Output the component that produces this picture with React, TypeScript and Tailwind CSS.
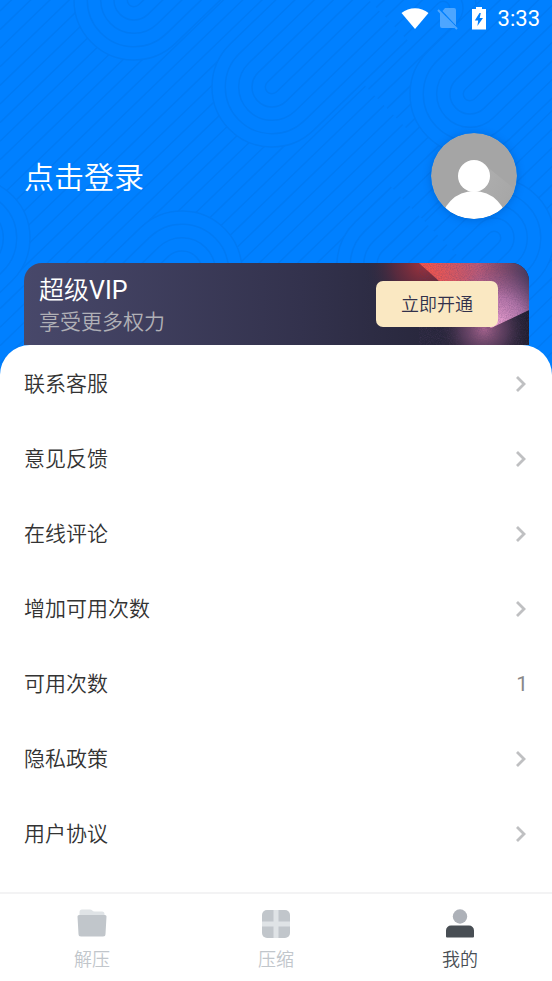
import React from "react";

type LoopProps = {
  x: number;
  y: number;
  angle: number;
  length: number;
};

type MenuItem = {
  label: string;
  value?: string;
};

const menuItems: MenuItem[] = [
  { label: "联系客服" },
  { label: "意见反馈" },
  { label: "在线评论" },
  { label: "增加可用次数" },
  { label: "可用次数", value: "1" },
  { label: "隐私政策" },
  { label: "用户协议" },
];

const ringSizes = [60, 46.7, 33.3, 20, 6.7];

const stripes = Array.from({ length: 52 }, (_, i) => i * 18.6 + 11);

// U shaped bundle of lines, open to the right before rotation
const Loop: React.FC<LoopProps> = ({ x, y, angle, length }) => (
  <g transform={`translate(${x} ${y}) rotate(${angle})`}>
    {ringSizes.map((r) => (
      <path
        key={r}
        d={`M${length} ${-r}H0A${r} ${r} 0 0 0 0 ${r}H${length}`}
        fill="#0080ff"
      />
    ))}
  </g>
);

const HeaderPattern: React.FC = () => (
  <svg
    className="absolute inset-x-0 top-0 h-96 w-full"
    viewBox="0 0 552 384"
    preserveAspectRatio="xMidYMin slice"
    aria-hidden="true"
  >
    <g stroke="#007af4" strokeWidth="1.5" fill="none">
      {stripes.map((s) => (
        <path key={s} d={`M0 ${s}L600 ${s - 579}`} />
      ))}
      <Loop x={134} y={0} angle={-44} length={120} />
      <Loop x={443} y={8} angle={136} length={110} />
      <Loop x={272} y={87} angle={-44} length={130} />
      <Loop x={470} y={94} angle={-44} length={150} />
      <Loop x={-30} y={238} angle={136} length={100} />
      <Loop x={182} y={271} angle={136} length={200} />
      <Loop x={494} y={238} angle={136} length={70} />
      <Loop x={397} y={265} angle={-44} length={50} />
    </g>
  </svg>
);

const StatusBar: React.FC = () => (
  <div className="flex h-[38px] items-center justify-end pr-3 text-white">
    <svg width="28" height="24" viewBox="0 0 28 24" className="mr-2">
      <path d="M0.500 6C8 -0.500 20 -0.500 27.500 6L14 22Z" fill="#fff" />
    </svg>
    <svg width="22" height="24" viewBox="0 0 22 24" className="mr-3">
      <path
        d="M8 1H17a2 2 0 0 1 2 2V18.500L5.500 4ZM3 5L18 21H5a2 2 0 0 1-2-2Z"
        fill="#4da6ff"
      />
      <path d="M1 3L20 22" stroke="#4da6ff" strokeWidth="2" />
    </svg>
    <svg width="16" height="24" viewBox="0 0 16 24" className="mr-[11px]">
      <path
        d="M5 0H11V2H15V22.500H1V2H5ZM8.500 6L3.800 13.500H7.200L6.400 19L12 11H8.700L9.800 6Z"
        fill="#fff"
        fillRule="evenodd"
      />
    </svg>
    <span className="text-[22px] leading-6 font-[450]">3:33</span>
  </div>
);

const Avatar: React.FC = () => (
  <svg
    width="86"
    height="86"
    viewBox="0 0 86 86"
    className="rounded-full shadow-[0_1px_8px_rgba(0,50,120,0.3)]"
    aria-hidden="true"
  >
    <defs>
      <clipPath id="avatar-clip">
        <circle cx="43" cy="43" r="43" />
      </clipPath>
      <linearGradient id="avatar-ray" x1="0" y1="0" x2="1" y2="0.7">
        <stop offset="0" stopColor="#b0b0b0" />
        <stop offset="1" stopColor="#a5a5a5" />
      </linearGradient>
    </defs>
    <g clipPath="url(#avatar-clip)">
      <rect width="86" height="86" fill="#a5a5a5" />
      <path d="M55 33L86 58V86H66L43 58Z" fill="url(#avatar-ray)" />
      <circle cx="43" cy="43" r="16" fill="#fff" />
      <circle cx="43" cy="91" r="33" fill="#fff" />
    </g>
  </svg>
);

const BannerArt: React.FC = () => (
  <svg
    className="absolute top-0 right-0 h-full"
    width="185"
    height="82"
    viewBox="0 0 185 82"
    aria-hidden="true"
  >
    <defs>
      <radialGradient id="art-red" gradientUnits="userSpaceOnUse" cx="80" cy="0" r="60">
        <stop offset="0" stopColor="#a5323c" />
        <stop offset="0.5" stopColor="#6b2b3d" stopOpacity="0.7" />
        <stop offset="1" stopColor="#2b2a40" stopOpacity="0" />
      </radialGradient>
      <linearGradient id="art-beam" gradientUnits="userSpaceOnUse" x1="85" y1="15" x2="185" y2="5">
        <stop offset="0" stopColor="#f2564e" />
        <stop offset="0.5" stopColor="#b95a78" />
        <stop offset="1" stopColor="#453a5c" />
      </linearGradient>
      <radialGradient id="art-pink" gradientUnits="userSpaceOnUse" cx="152" cy="64" r="60">
        <stop offset="0" stopColor="#f3a8d8" />
        <stop offset="0.5" stopColor="#c583bd" stopOpacity="0.75" />
        <stop offset="1" stopColor="#8b5b90" stopOpacity="0" />
      </radialGradient>
      <radialGradient id="art-glow" gradientUnits="userSpaceOnUse" cx="140" cy="66" r="46">
        <stop offset="0" stopColor="#a8658f" />
        <stop offset="0.5" stopColor="#684466" stopOpacity="0.7" />
        <stop offset="1" stopColor="#2a2638" stopOpacity="0" />
      </radialGradient>
      <filter id="art-grain" x="0" y="0" width="100%" height="100%">
        <feTurbulence type="fractalNoise" baseFrequency="0.9" numOctaves="2" />
        <feColorMatrix values="0 0 0 0 0.1  0 0 0 0 0.05  0 0 0 0 0.15  1.6 0 0 0 -0.6" />
      </filter>
    </defs>
    <rect width="185" height="82" fill="url(#art-red)" />
    <rect x="90" y="20" width="95" height="62" fill="url(#art-glow)" />
    <path d="M75 0H185V47L147 65Z" fill="url(#art-beam)" />
    <path d="M75 0H185V47L147 65Z" fill="url(#art-pink)" />
    <rect x="75" width="110" height="82" filter="url(#art-grain)" opacity="0.4" />
  </svg>
);

const VipBanner: React.FC = () => (
  <section className="relative mr-[23px] ml-6 flex h-[82px] items-center justify-between overflow-hidden rounded-t-[18px] bg-linear-to-r from-[#48486a] via-[#33324d] via-55% to-[#201f30] pr-[31px] pl-[15px]">
    <BannerArt />
    <div className="pt-1">
      <h2 className="text-[25px] leading-8 text-white">
        超级<span className="font-normal">VIP</span>
      </h2>
      <p className="text-[21px] leading-[30px] text-[#b0b0b6]">享受更多权力</p>
    </div>
    <button className="relative h-[46px] w-[122px] rounded-[7px] bg-[#fae8c2] text-[18px] text-[#32314b]">
      立即开通
    </button>
  </section>
);

const ChevronIcon: React.FC = () => (
  <svg width="12" height="18" viewBox="0 0 12 18" className="mr-px mb-0.5" aria-hidden="true">
    <path d="M2 2L9 9L2 16" fill="none" stroke="#bfc0c2" strokeWidth="2.8" />
  </svg>
);

const FolderIcon: React.FC = () => (
  <svg width="30" height="30" viewBox="0 0 30 30" aria-hidden="true">
    <path
      d="M2.500 9V3A2.500 2.500 0 0 1 5 0.500H13C15 0.500 15.500 2.500 17.500 2.500H25A2.500 2.500 0 0 1 27.500 5V9Z"
      fill="#dfe3e6"
    />
    <path
      d="M2 6H28A1.500 1.500 0 0 1 29.500 7.500L28.500 25A2.500 2.500 0 0 1 26 27.500H4A2.500 2.500 0 0 1 1.500 25L0.500 7.500A1.500 1.500 0 0 1 2 6Z"
      fill="#c1c6cb"
    />
  </svg>
);

const GridIcon: React.FC = () => (
  <svg width="30" height="30" viewBox="0 0 30 30" aria-hidden="true">
    <rect x="1" y="1" width="28" height="28" rx="5" fill="#c1c6cb" />
    <path d="M12.500 1H17.500V29H12.500Z" fill="#dfe3e6" />
    <path d="M1 12.500H29V17.500H1Z" fill="#dfe3e6" />
  </svg>
);

const UserIcon: React.FC = () => (
  <svg width="30" height="30" viewBox="0 0 30 30" aria-hidden="true">
    <circle cx="15" cy="7.500" r="7.200" fill="#adb1b8" />
    <path
      d="M6 16.500H24A5 5 0 0 1 29 21.500V27.500A1 1 0 0 1 28 28.500H2A1 1 0 0 1 1 27.500V21.500A5 5 0 0 1 6 16.500Z"
      fill="#484e54"
    />
  </svg>
);

const tabs = [
  { label: "解压", icon: <FolderIcon />, active: false },
  { label: "压缩", icon: <GridIcon />, active: false },
  { label: "我的", icon: <UserIcon />, active: true },
];

const App: React.FC = () => {
  return (
    <div className="relative flex min-h-screen flex-col overflow-hidden bg-[#0080ff] font-['Roboto','Noto_Sans_CJK_SC',sans-serif] font-[350]">
      <HeaderPattern />

      <header className="relative">
        <StatusBar />
        <button className="mt-[95px] mb-11 flex w-full items-center justify-between pr-[35px] pl-6 text-left">
          <span className="pt-1 text-[30px] leading-10 text-white">点击登录</span>
          <Avatar />
        </button>
        <VipBanner />
      </header>

      <main className="relative flex-1 rounded-t-[30px] bg-white pt-0.5">
        <ul>
          {menuItems.map((item) => (
            <li key={item.label}>
              <button className="flex h-[75px] w-full items-center justify-between px-6 text-left text-[21px] text-[#333]">
                <span>{item.label}</span>
                {item.value ? (
                  <span className="font-normal text-[#888]">{item.value}</span>
                ) : (
                  <ChevronIcon />
                )}
              </button>
            </li>
          ))}
        </ul>
      </main>

      <nav className="relative grid h-[89px] grid-cols-3 border-t-2 border-[#f3f3f4] bg-white">
        {tabs.map((tab) => (
          <button
            key={tab.label}
            className={
              tab.active
                ? "flex flex-col items-center gap-1 pt-[15px] text-[18px] leading-[34px] text-[#484e54]"
                : "flex flex-col items-center gap-1 pt-[15px] text-[18px] leading-[34px] text-[#c1c6cb]"
            }
          >
            {tab.icon}
            <span>{tab.label}</span>
          </button>
        ))}
      </nav>
    </div>
  );
};

export default App;
